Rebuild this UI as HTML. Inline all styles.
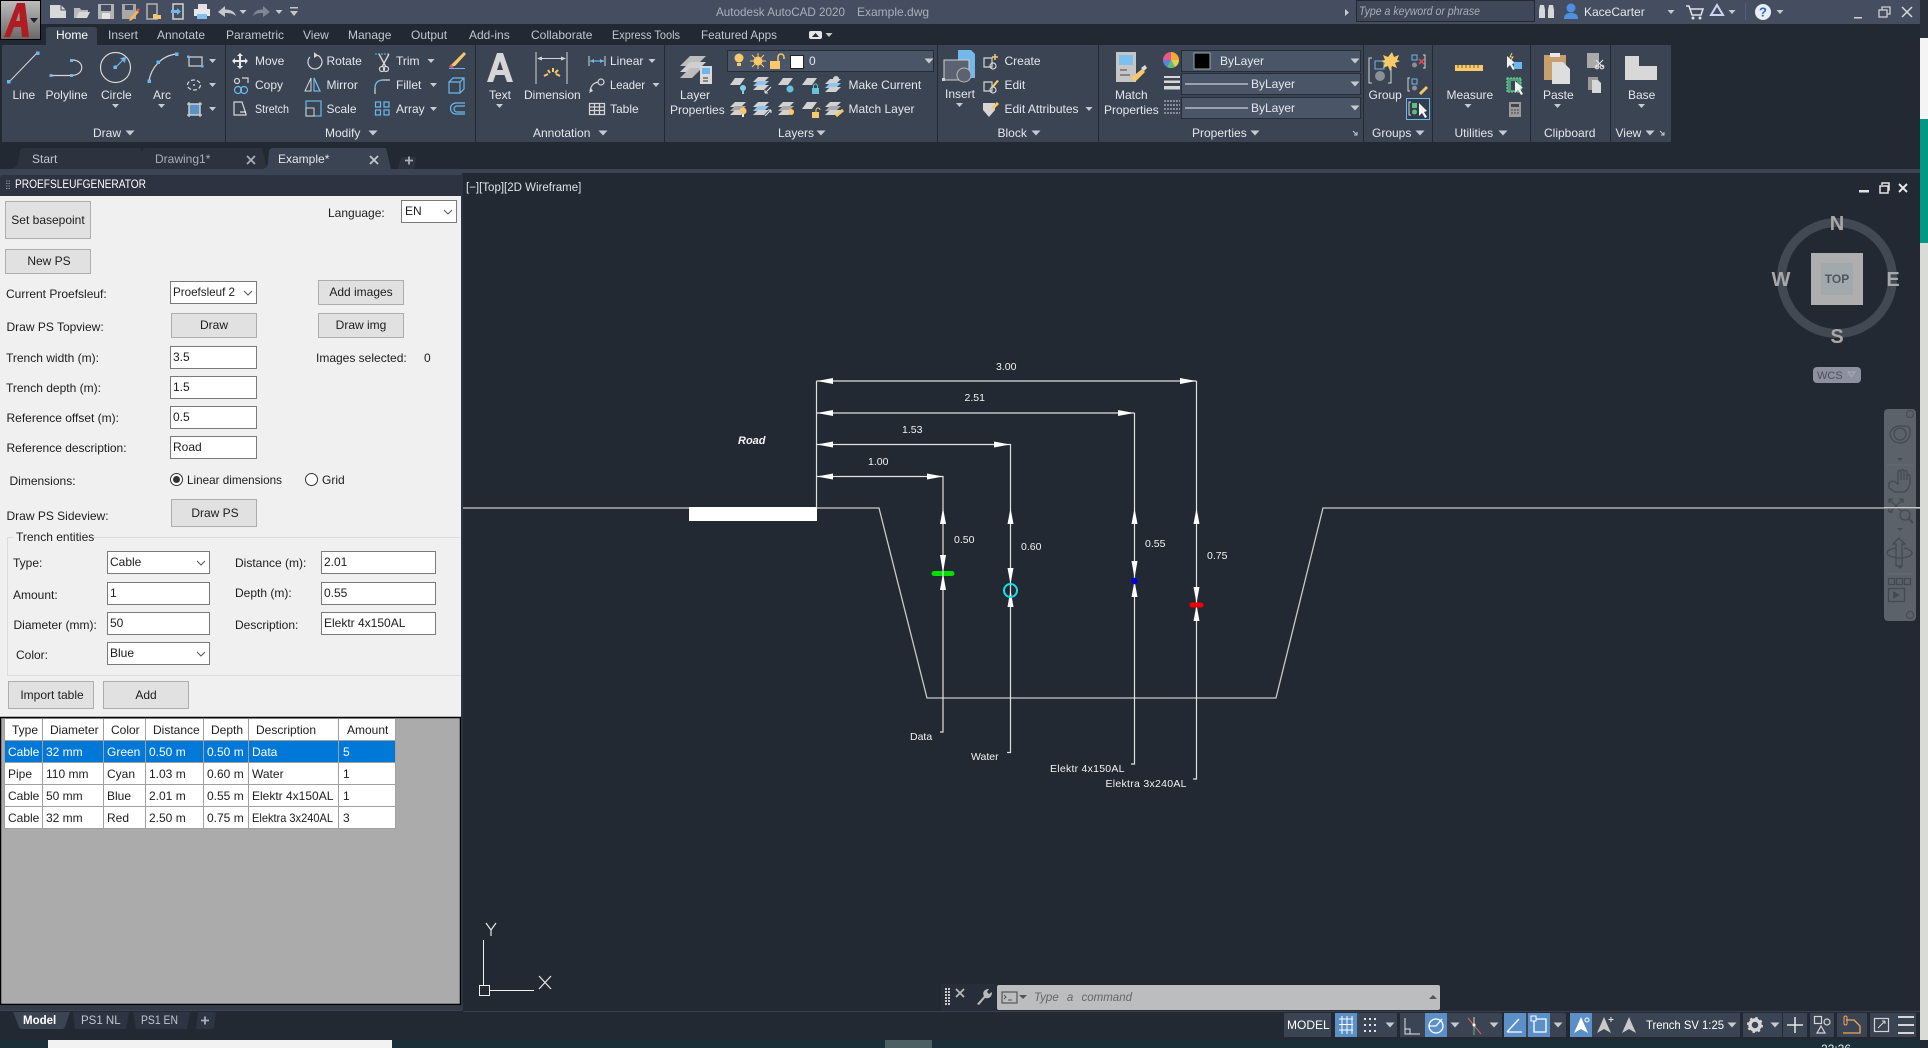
<!DOCTYPE html>
<html><head><meta charset="utf-8"><title>Autodesk AutoCAD 2020 Example.dwg</title>
<style>
html,body{margin:0;padding:0;background:#222932;width:1928px;height:1048px;overflow:hidden}
svg{display:block;position:absolute;left:0;top:0}
text{font-family:"Liberation Sans",sans-serif;font-size:12px;fill:#e4e7ec}
.g{fill:#a9afba}
.f{fill:#1c1c1c}
.d{fill:#f2f2f2;font-size:10.5px}
.w{fill:#fff}
.ic{fill:none;stroke:#d6d6d6;stroke-width:1.2}
.bl{fill:none;stroke:#6cb8ee;stroke-width:1.2}
.btn{fill:#e1e1e1;stroke:#adadad;stroke-width:1}
.inp{fill:#fff;stroke:#7a7a7a;stroke-width:1}
.chev{fill:none;stroke:#555;stroke-width:1}
.dl{stroke:#e0e0e0;stroke-width:1.2;fill:none}
.ar{fill:#fff}
.nav{fill:none;stroke:#444a52;stroke-width:1.3}
</style></head><body>
<svg width="1928" height="1048" viewBox="0 0 1928 1048" xmlns="http://www.w3.org/2000/svg">
<defs>
<polygon id="t" points="-3.5,-2 3.5,-2 0,2" fill="#c6cbd3"/>
<polygon id="t2" points="-4.5,-2.5 4.5,-2.5 0,2.5" fill="#c6cbd3"/>
<g id="ch"><polyline class="chev" points="-4,-2 0,2 4,-2"/></g>
<g id="lay"><polygon points="-9,2 -4,-5 6,-5 1,2" fill="#d2d2d2"/></g>
<g id="stk"><polygon points="-9,-1 -4,-6 7,-6 2,-1" fill="#d2d2d2"/><polygon points="-9,3 -4,-2 7,-2 2,3" fill="#8fc6ee"/><polygon points="-9,7 -4,2 7,2 2,7" fill="#d2d2d2"/></g>
<g id="gs"><polygon points="-9,-1 -4,-6 7,-6 2,-1" fill="#d2d2d2"/><polygon points="-9,3 -4,-2 7,-2 2,3" fill="#a9a9a9"/><polygon points="-9,7 -4,2 7,2 2,7" fill="#d2d2d2"/></g>
<linearGradient id="logo" x1="0" y1="0" x2="0" y2="1"><stop offset="0" stop-color="#bdbdbd"/><stop offset="1" stop-color="#686868"/></linearGradient>
</defs>

<!-- base -->
<rect width="1928" height="1048" fill="#222932"/>
<rect width="1920" height="24" fill="#454e60"/>
<rect x="0" y="24" width="1920" height="21" fill="#222932"/>
<path d="M46 45V30q0-3 3-3h45q3 0 3 3v15z" fill="#3b4453"/>

<!-- right strip -->
<rect x="1920" y="0" width="8" height="38" fill="#2a303b"/>
<rect x="1920" y="38" width="8" height="81" fill="#f4f4f4"/>
<rect x="1920" y="119" width="8" height="124" fill="#009a84"/>
<rect x="1920" y="243" width="8" height="797" fill="#d9dcd6"/>

<!-- logo -->
<rect x="0.5" y="0.5" width="40" height="39" fill="url(#logo)" stroke="#000"/>
<path d="M4 37L17 3h8l4 34h-7l-1-10h-7l-4 10zM16 21h4l-.8-9z" fill="#b01c22" fill-rule="evenodd"/>
<polygon points="30,18 38,18 34,23" fill="#222"/>

<!-- QAT -->
<path d="M50 5h11l5 5v8H50z" fill="#d8d8d8"/><path d="M61 5v5h5" fill="none" stroke="#454e60"/>
<path d="M74 8h6l1 2h7v3h-9l-2 5h-3z" fill="#b9b9b9"/><path d="M76 18l3-6h11l-3 6z" fill="#d8d8d8"/>
<path d="M98 4h16v15H98z" fill="#b4b4b4"/><rect x="101" y="5" width="10" height="6" fill="#454e60"/><rect x="102" y="13" width="8" height="6" fill="#e4e4e4"/>
<path d="M122 4h14v15h-14z" fill="#a8a8a8"/><rect x="125" y="5" width="8" height="5" fill="#454e60"/><path d="M130 18l7-8 2 2-7 8-3 1z" fill="#f2b55b"/><circle cx="138" cy="10" r="1.500" fill="#e45a5a"/>
<rect x="147" y="4" width="10" height="15" fill="none" stroke="#b4b4b4" stroke-width="1.500"/><path d="M153 14h3l1 1h4v4h-8z" fill="#f5c76a"/>
<rect x="173" y="4" width="10" height="15" fill="none" stroke="#d2d2d2" stroke-width="1.500"/><path d="M171 10h6v-2l4 3.500-4 3.500v-2h-6z" fill="#6cb8ee"/>
<rect x="198" y="4" width="9" height="5" fill="#e2e2e2"/><rect x="194" y="9" width="16" height="7" fill="#e8e8e8"/><rect x="197" y="14" width="10" height="5" fill="#7fc0ee"/>
<path d="M218 12l7-6v3.500c6 0 10 2 11 7-2-3-6-3.500-11-3.500V17z" fill="#c6c6c6"/><use href="#t" x="243" y="12"/>
<path d="M270 12l-7-6v3.500c-6 0-9 2-10 7 2-3 5-3.500 10-3.500V17z" fill="#7f8796"/><use href="#t" x="279" y="12"/>
<rect x="290" y="7" width="8" height="1.500" fill="#c6c6c6"/><polygon points="290,11 298,11 294,16" fill="#c6c6c6"/>

<text class="g" x="716" y="16" textLength="129" lengthAdjust="spacingAndGlyphs">Autodesk AutoCAD 2020</text><text class="g" x="857" y="16">Example.dwg</text>

<!-- search + infocenter -->
<polygon points="1345,9 1345,16 1349,12.500" fill="#c6cbd3"/>
<rect x="1356.500" y="0.500" width="178" height="21" fill="#3f4858" stroke="#23292f"/>
<text x="1359" y="15" style="font-style:italic;font-size:11.500px" class="g" textLength="121" lengthAdjust="spacingAndGlyphs">Type a keyword or phrase</text>
<path d="M1540 5h4l1 5v8h-6v-8zM1549 5h4l1 5v8h-6v-8z" fill="#d8d8d8"/>
<circle cx="1571" cy="8" r="4.500" fill="#4f8fe0"/><path d="M1564 19c0-5 3-6 7-6s7 1 7 6z" fill="#4f8fe0"/>
<text x="1584" y="16">KaceCarter</text><use href="#t" x="1671" y="12"/>
<path d="M1686 6h3l3 9h9l2-6h-13" fill="none" stroke="#dfe3ea" stroke-width="1.500"/><circle cx="1693" cy="18" r="1.500" fill="#dfe3ea"/><circle cx="1700" cy="18" r="1.500" fill="#dfe3ea"/>
<path d="M1717 5l6 10h-12z" fill="none" stroke="#c9d6ee" stroke-width="2"/><use href="#t" x="1732" y="12"/>
<rect x="1745" y="3" width="1" height="17" fill="#566072"/>
<circle cx="1763" cy="12" r="8" fill="#e9edf5"/><text x="1763" y="16.500" text-anchor="middle" style="font-weight:bold;font-size:13px;fill:#2b66c4">?</text><use href="#t" x="1780" y="12"/>
<rect x="1854" y="17" width="8" height="1.500" fill="#d0d0d0"/>
<rect x="1879" y="10" width="8" height="7" fill="none" stroke="#d0d0d0" stroke-width="1.300"/><path d="M1882 10V7h8v7h-3" fill="none" stroke="#d0d0d0" stroke-width="1.300"/>
<path d="M1902 7l10 10M1912 7l-10 10" stroke="#d8d8d8" stroke-width="1.500"/>

<!-- ribbon tabs -->
<text class="w" x="56" y="39">Home</text>
<g class="tb"><text x="108" y="39" style="fill:#c2c7d0">Insert</text><text x="157" y="39" style="fill:#c2c7d0">Annotate</text><text x="226" y="39" style="fill:#c2c7d0">Parametric</text><text x="303" y="39" style="fill:#c2c7d0">View</text><text x="348" y="39" style="fill:#c2c7d0">Manage</text><text x="411" y="39" style="fill:#c2c7d0">Output</text><text x="469" y="39" style="fill:#c2c7d0">Add-ins</text><text x="531" y="39" style="fill:#c2c7d0">Collaborate</text><text x="612" y="39" style="fill:#c2c7d0" textLength="68" lengthAdjust="spacingAndGlyphs">Express Tools</text><text x="701" y="39" style="fill:#c2c7d0" textLength="76" lengthAdjust="spacingAndGlyphs">Featured Apps</text></g>
<rect x="809" y="31" width="13" height="8" rx="2" fill="#e4e4e4"/><polygon points="812,37 819,37 815.500,33" fill="#222932"/><use href="#t" x="829" y="35"/>

<!-- ribbon panels -->
<rect x="2" y="45" width="223" height="97" fill="#3b4453"/>
<rect x="226" y="45" width="249" height="97" fill="#3b4453"/>
<rect x="476" y="45" width="188" height="97" fill="#3b4453"/>
<rect x="665" y="45" width="272" height="97" fill="#3b4453"/>
<rect x="938" y="45" width="160" height="97" fill="#3b4453"/>
<rect x="1099" y="45" width="264" height="97" fill="#3b4453"/>
<rect x="1364" y="45" width="68" height="97" fill="#3b4453"/>
<rect x="1433" y="45" width="97" height="97" fill="#3b4453"/>
<rect x="1531" y="45" width="79" height="97" fill="#3b4453"/>
<rect x="1611" y="45" width="60" height="97" fill="#3b4453"/>

<!-- Draw panel -->
<path d="M9 82L37 53" stroke="#d6d6d6" stroke-width="1"/><rect x="7" y="80" width="3.500" height="3.500" fill="#6cb8ee"/><rect x="36" y="51.500" width="3.500" height="3.500" fill="#6cb8ee"/>
<text x="12.500" y="99">Line</text>
<path d="M51 75.500H71M72 60c13 0 13 15 0 15.500" fill="none" stroke="#d6d6d6" stroke-width="1.200"/><rect x="49.500" y="74" width="3" height="3" fill="#6cb8ee"/><rect x="70" y="74" width="3" height="3" fill="#6cb8ee"/><rect x="70" y="59" width="3" height="3" fill="#6cb8ee"/>
<text x="45.500" y="99">Polyline</text>
<circle cx="115.500" cy="67.500" r="15" class="ic"/><path d="M115.500 67.500L124 59" class="bl"/><polygon points="126,57 120,58 125,63" fill="#6cb8ee"/><rect x="113.500" y="65.500" width="3.500" height="3.500" fill="#6cb8ee"/>
<text x="101" y="99">Circle</text><use href="#t" x="115.500" y="106"/>
<path d="M149 81c2-13 12-25 27-27" class="ic"/><rect x="147.500" y="79.500" width="3.500" height="3.500" fill="#6cb8ee"/><rect x="156.500" y="60.500" width="3.500" height="3.500" fill="#6cb8ee"/><rect x="175" y="52.500" width="3.500" height="3.500" fill="#6cb8ee"/>
<text x="153" y="99">Arc</text><use href="#t" x="161.500" y="106"/>
<rect x="189" y="57" width="13" height="9" class="ic"/><rect x="187" y="55.500" width="2.500" height="2.500" fill="#6cb8ee"/><rect x="201" y="65" width="2.500" height="2.500" fill="#6cb8ee"/><use href="#t" x="212.500" y="61"/>
<ellipse cx="194" cy="85" rx="6.500" ry="5" class="ic" stroke-dasharray="4 2"/><rect x="193" y="84" width="2" height="2" fill="#6cb8ee"/><use href="#t" x="212.500" y="85"/>
<rect x="189" y="104" width="11" height="11" fill="#5a93c4"/><rect x="189" y="104" width="11" height="11" class="ic"/><path d="M187 104h15M187 115h15M189 102v15M200 102v15" class="ic"/><use href="#t" x="212.500" y="109"/>
<text x="93" y="137">Draw</text><use href="#t2" x="130" y="133"/>

<!-- Modify panel -->
<path d="M240 53l3 3h-2v4h4v-2l3 3-3 3v-2h-4v4h2l-3 3-3-3h2v-4h-4v2l-3-3 3-3v2h4v-4h-2z" fill="#e8e8e8"/>
<text x="255" y="65">Move</text>
<path d="M316 55a7 7 0 1 1-6 2" class="ic" stroke-width="1.400"/><polygon points="314,52 318,55.500 314,58" fill="#d6d6d6"/>
<text x="326.500" y="65">Rotate</text>
<path d="M375 54h15" stroke="#6cb8ee" stroke-dasharray="2 1"/><path d="M379 54l7 13M389 54l-7 13" stroke="#d6d6d6" stroke-width="1.400"/><circle cx="382" cy="69" r="2.500" class="ic"/><circle cx="386" cy="69" r="2.500" class="ic"/>
<text x="396" y="65">Trim</text><use href="#t" x="431" y="61"/>
<path d="M452 64l12-12 2 2-11 12-4 0z" fill="#f7c96b"/><path d="M451 64l3 3-2 1-3-1z" fill="#e06060"/><rect x="449" y="68" width="16" height="1" fill="#6cb8ee"/>
<circle cx="237" cy="81" r="2.500" class="ic"/><path d="M242 78h6v5" class="ic"/><circle cx="238" cy="90" r="3.500" class="bl"/><circle cx="244" cy="90" r="3.500" class="bl"/>
<text x="255" y="89">Copy</text>
<path d="M305 91l6-13v13zM314 78l6 13h-6z" fill="none" stroke="#d6d6d6"/><path d="M314 78l6 13h-6z" class="bl"/>
<text x="326.500" y="89">Mirror</text>
<path d="M375 94v-6c0-5 3-8 8-8h7" class="ic"/><path d="M375 88c0-5 3-8 8-8" class="bl"/>
<text x="396" y="89">Fillet</text><use href="#t" x="433.500" y="85"/>
<path d="M449 82h11v11h-11zM449 82l4-4h11v11l-4 4M460 82l4-4" class="bl"/>
<path d="M234 102h8l4 12v1h-12z" class="ic"/><path d="M240 112h6" stroke="#fff"/>
<text x="255" y="113" textLength="34" lengthAdjust="spacingAndGlyphs">Stretch</text>
<rect x="306" y="101" width="15" height="15" class="bl"/><rect x="306" y="108" width="8" height="8" fill="#3b4453" stroke="#d6d6d6"/>
<text x="326.500" y="113">Scale</text>
<g class="bl"><rect x="375.500" y="102" width="5" height="5"/><rect x="384" y="102" width="5" height="5"/><rect x="375.500" y="110" width="5" height="5"/><rect x="384" y="110" width="5" height="5"/></g>
<text x="396" y="113">Array</text><use href="#t" x="433.500" y="109"/>
<path d="M465 103h-9a5.500 5.500 0 0 0 0 11h9M465 106h-8a3 3 0 0 0 0 6h8" class="bl"/>
<text x="325" y="137">Modify</text><use href="#t2" x="373" y="133"/>

<!-- Annotation -->
<path d="M487 82L497 53h6L513 82h-6l-2.500-7h-9L493 82zM497 70h6l-3-9z" fill="#d6d6d6" fill-rule="evenodd"/>
<text x="489" y="99">Text</text><use href="#t" x="499.500" y="106"/>
<path d="M536 52v32M567 52v32" stroke="#d6d6d6"/><path d="M540 58.500h23" stroke="#d6d6d6"/><polygon points="537,58.500 542,56.500 542,60.500" fill="#d6d6d6"/><polygon points="566,58.500 561,56.500 561,60.500" fill="#d6d6d6"/>
<path d="M544 76l4-2M548 70l2 3M553 68v4M558 70l-3 3M560 76l-4-2" stroke="#f7c96b" stroke-width="2"/>
<text x="524" y="99">Dimension</text>
<path d="M589 56v10M605 56v10" stroke="#d6d6d6"/><path d="M590 61h14" class="bl"/><polygon points="590,61 594,59 594,63" fill="#6cb8ee"/><polygon points="604,61 600,59 600,63" fill="#6cb8ee"/>
<text x="610" y="65">Linear</text><use href="#t" x="652" y="61"/>
<circle cx="601" cy="82" r="3" class="ic"/><path d="M598 82c-4 1-7 3-8 9" class="ic"/><polygon points="589,93 591,88 593,91" fill="#d6d6d6"/>
<text x="610" y="89" textLength="35" lengthAdjust="spacingAndGlyphs">Leader</text><use href="#t" x="656" y="85"/>
<path d="M589.500 103.500h15v11h-15zM589.500 107h15M589.500 110.500h15M594.500 103.500v11M599.500 103.500v11" class="ic" stroke-width="1"/>
<text x="610" y="113">Table</text>
<text x="533" y="137">Annotation</text><use href="#t2" x="603" y="133"/>

<!-- Layers -->
<polygon points="680,66 690,56 706,56 696,66" fill="#bdbdbd"/><polygon points="680,72 690,62 706,62 696,72" fill="#cfcfcf"/><polygon points="680,78 690,68 702,68 692,78" fill="#bdbdbd"/>
<rect x="700" y="66" width="12" height="18" fill="#d8d8d8"/><rect x="702" y="68" width="8" height="6" fill="#6cb8ee"/><path d="M703 78h5M703 81h5" stroke="#333"/>
<text x="680" y="99">Layer</text><text x="670" y="114">Properties</text>
<rect x="727.500" y="50.500" width="206" height="21" fill="#4a5568" stroke="#262c36"/>
<circle cx="739" cy="58" r="4.500" fill="#f7c96b"/><rect x="737" y="63" width="4" height="3" fill="#f7c96b"/>
<circle cx="758" cy="61" r="4.500" fill="#f7c96b"/><path d="M758 53v16M750 61h16M752 55l12 12M764 55l-12 12" stroke="#f7c96b"/>
<rect x="770" y="61" width="10" height="8" fill="#f7c96b"/><path d="M778 61v-4a3 3 0 0 1 6 0v2" fill="none" stroke="#f7c96b" stroke-width="1.500"/>
<rect x="790.500" y="55.500" width="13" height="13" fill="#fff" stroke="#222"/>
<text x="809" y="65">0</text><use href="#t2" x="929" y="61"/>

<use href="#lay" x="739" y="83"/><circle cx="743" cy="88" r="3" fill="#7fd3e8"/><rect x="742" y="91" width="2" height="3" fill="#7fd3e8"/>
<use href="#stk" x="762" y="83"/><path d="M765 93l6-6M765 93h3M765 93v-3" stroke="#e8e8e8" fill="none"/>
<use href="#lay" x="787" y="83"/><circle cx="790" cy="89" r="3.500" fill="#62c6d8"/>
<use href="#lay" x="811" y="83"/><rect x="812" y="88" width="7" height="6" fill="#62c6d8"/><path d="M813.500 88v-2a2 2 0 0 1 4 0v2" fill="none" stroke="#62c6d8"/>
<use href="#stk" x="834" y="85"/><circle cx="836" cy="79" r="3" fill="#d2d2d2"/>
<text x="848.500" y="89">Make Current</text>
<use href="#gs" x="739" y="108"/><circle cx="743" cy="111" r="3.500" fill="#f7c96b"/><rect x="742" y="114" width="2" height="3" fill="#e8e8e8"/>
<use href="#stk" x="762" y="108"/><path d="M765 116l6-6M771 110h-3M771 110v3" stroke="#e8e8e8" fill="none"/>
<use href="#gs" x="787" y="108"/><circle cx="791" cy="112" r="3" fill="#f7c96b"/>
<use href="#lay" x="811" y="107"/><rect x="812" y="112" width="7" height="6" fill="#f7c96b"/><path d="M816 112v-2a2 2 0 0 1 4 0" fill="none" stroke="#f7c96b"/>
<use href="#gs" x="834" y="108"/><path d="M836 116l7-6" stroke="#f7c96b" stroke-width="3"/>
<text x="848.500" y="113">Match Layer</text>
<text x="778" y="137">Layers</text><use href="#t2" x="821" y="133"/>

<!-- Block -->
<path d="M958 50h13l4 4v24h-17z" fill="#74b8ea"/>
<rect x="944" y="60" width="25" height="20" fill="#5b6270" stroke="#cfcfcf"/><circle cx="964" cy="75" r="7" fill="#5b6270" stroke="#b9b9b9"/><rect x="942" y="78" width="3" height="3" fill="#cfcfcf"/>
<text x="945" y="98">Insert</text><use href="#t" x="959.500" y="105"/>
<path d="M984 58h8v9h-8z" class="ic"/><circle cx="993" cy="66" r="3" class="ic"/><path d="M995 54v6M992 57h6" stroke="#f7c96b" stroke-width="1.500"/>
<text x="1004.500" y="65">Create</text>
<path d="M984 82h8v9h-8z" class="ic"/><circle cx="993" cy="90" r="3" class="ic"/><path d="M992 86l5-6 2 1-5 6z" fill="#f7c96b"/>
<text x="1004.500" y="89">Edit</text>
<path d="M983 103h12v7l-6 7-6-7z" fill="#d6d6d6"/><path d="M991 108l6-6 2 2-6 6z" fill="#f7c96b"/>
<text x="1004.500" y="113">Edit Attributes</text><use href="#t" x="1089" y="109"/>
<text x="997.500" y="137">Block</text><use href="#t2" x="1036" y="133"/>

<!-- Properties -->
<rect x="1116" y="52" width="20" height="30" fill="#c6c6c6"/><rect x="1119" y="55" width="14" height="10" fill="#7cc0ee"/>
<path d="M1120 70h7M1120 75h10" stroke="#444"/><path d="M1131 78l11-9 3 3-10 10z" fill="#f7c96b"/><path d="M1141 68l4-3 2 3-3 3z" fill="#dcdcdc"/>
<text x="1115" y="99">Match</text><text x="1104" y="114">Properties</text>
<circle cx="1171" cy="60" r="8" fill="#e05a8a"/><path d="M1171 60v-8a8 8 0 0 1 8 8z" fill="#f7a83b"/><path d="M1171 60h8a8 8 0 0 1-4 7z" fill="#dcd34e"/><path d="M1171 60l4 7a8 8 0 0 1-8 0z" fill="#5fbf73"/><path d="M1171 60l-4 7a8 8 0 0 1-4-7z" fill="#5f7fe0"/>
<path d="M1164 76h16v2h-16zM1164 80.500h16v2.500h-16zM1164 86h16v3.500h-16z" fill="#d6d6d6"/>
<path d="M1164 101h16M1164 105h16M1164 109h16M1164 113h16" stroke="#d6d6d6" stroke-dasharray="2 1"/>
<rect x="1181.500" y="50.500" width="179" height="21" fill="#4a5568" stroke="#262c36"/>
<rect x="1181.500" y="73.500" width="179" height="21" fill="#4a5568" stroke="#262c36"/>
<rect x="1181.500" y="97.500" width="179" height="21" fill="#4a5568" stroke="#262c36"/>
<rect x="1194" y="53" width="16" height="16" fill="#000" stroke="#9aa" stroke-width="1"/>
<text x="1220" y="65">ByLayer</text>
<path d="M1185 84h63M1185 108h63" stroke="#eee"/>
<text x="1251" y="88">ByLayer</text><text x="1251" y="112">ByLayer</text>
<use href="#t2" x="1355" y="61"/><use href="#t2" x="1355" y="84"/><use href="#t2" x="1355" y="108"/>
<text x="1192" y="137">Properties</text><use href="#t2" x="1255" y="133"/>
<path d="M1353 131l4 4m0-3v3h-3" fill="none" stroke="#c6cbd3"/>

<!-- Groups -->
<path d="M1372 58h-3v25h3M1391 62v21h-3" fill="none" stroke="#d6d6d6"/><rect x="1375" y="61" width="9" height="8" fill="none" stroke="#6cb8ee"/><circle cx="1380" cy="76" r="5" fill="#8a8f98"/>
<path d="M1392 52l2 5 5-2-2 5 3 1-5 2 2 5-5-2-2 5-2-5-5 2 2-5-4-2 4-1-2-5 5 2z" fill="#f7c96b"/>
<rect x="1412" y="55" width="5" height="5" fill="none" stroke="#6cb8ee"/><circle cx="1414.500" cy="65" r="2.500" fill="#8a8f98"/><path d="M1423 55h2v13h-2" fill="none" stroke="#d6d6d6"/><path d="M1419 59l5 5m0-5l-5 5" stroke="#e05050" stroke-width="1.500"/>
<rect x="1412" y="79" width="5" height="5" fill="none" stroke="#6cb8ee"/><circle cx="1414.500" cy="88" r="2.500" fill="#8a8f98"/><path d="M1410 78h-2v13h2" fill="none" stroke="#d6d6d6"/><path d="M1419 93l7-7 2 2-7 7z" fill="#f7c96b"/>
<rect x="1406.500" y="98.500" width="23" height="21" fill="#333c4a" stroke="#6cb8ee"/>
<rect x="1412" y="103" width="5" height="5" fill="#5dc083"/><circle cx="1414.500" cy="112" r="2.500" fill="#5dc083"/><path d="M1411 102h-2v13h2" fill="none" stroke="#d6d6d6"/><polygon points="1419,103 1419,116 1422,113 1425,118 1427,117 1424,112 1427,111" fill="#f2f2f2"/>
<text x="1368.500" y="99">Group</text>
<text x="1372" y="137">Groups</text><use href="#t2" x="1420" y="133"/>

<!-- Utilities -->
<rect x="1455" y="65" width="28" height="6" fill="#f7c96b"/><path d="M1458 65v3M1462 65v3M1466 65v3M1470 65v3M1474 65v3M1478 65v3" stroke="#7a6130"/>
<text x="1446.500" y="99">Measure</text><use href="#t" x="1468" y="106"/>
<polygon points="1507,56 1507,68 1510,65 1513,70 1515,69 1512,64 1515,63" fill="#f2f2f2"/><path d="M1512 53l-2 4h3l-2 3" stroke="#f7c96b" fill="none"/><rect x="1514" y="62" width="8" height="7" fill="#6cb8ee"/>
<rect x="1507" y="78" width="14" height="14" fill="#4e9d78" stroke="#6de29e" stroke-dasharray="2 1"/><rect x="1511" y="81" width="6" height="9" fill="#3b4453"/><polygon points="1515,81 1515,93 1518,90 1521,95 1523,94 1520,89 1523,88" fill="#f2f2f2"/>
<rect x="1509" y="102" width="12" height="15" fill="#9a9a9a"/><rect x="1511" y="104" width="8" height="3" fill="#444"/><path d="M1511 110h8M1511 113h8" stroke="#444" stroke-dasharray="2 1"/>
<text x="1454.500" y="137">Utilities</text><use href="#t2" x="1503" y="133"/>

<!-- Clipboard -->
<rect x="1544" y="55" width="22" height="25" fill="#c7a06e"/><rect x="1550" y="53" width="10" height="4" fill="#e8e8e8"/>
<path d="M1552 62h11l7 7v15h-18z" fill="#dedede"/>
<text x="1543" y="99">Paste</text><use href="#t" x="1557.500" y="106"/>
<rect x="1587" y="53" width="12" height="15" fill="#aaa"/><path d="M1596 60l7 7m0-7l-7 7" stroke="#e8e8e8"/><circle cx="1597" cy="67" r="1.800" class="ic"/><circle cx="1602" cy="67" r="1.800" class="ic"/>
<rect x="1588" y="77" width="10" height="13" fill="#9a9a9a"/><path d="M1592 80h6l3 3v10h-9z" fill="#d8d8d8"/>
<text x="1544" y="137">Clipboard</text>

<!-- View -->
<path d="M1625 56h14v10h18v14h-32z" fill="#d8d8d8"/>
<text x="1628" y="99">Base</text><use href="#t" x="1641.500" y="106"/>
<text x="1615.500" y="137">View</text><use href="#t2" x="1650" y="133"/>
<path d="M1660 131l4 4m0-3v3h-3" fill="none" stroke="#c6cbd3"/>

<!-- doc tabs -->
<path d="M8 169c5 0 9-2 10-6l2-12q1-3 4-3h117l4 21z" fill="#2c333f"/>
<path d="M136 169l6-18q1-3 4-3h116l5 21z" fill="#2c333f"/>
<path d="M262 169c3 0 5-2 6-6l1-12q1-3 4-3h113l5 21z" fill="#3b4453"/>
<text x="32" y="163" style="fill:#c2c7d0">Start</text>
<text x="155" y="163" style="fill:#a9afba">Drawing1*</text>
<path d="M247 156l8 8m0-8l-8 8" stroke="#a9afba" stroke-width="1.800"/>
<text x="278" y="163">Example*</text>
<path d="M370 156l8 8m0-8l-8 8" stroke="#c2c7d0" stroke-width="1.800"/>
<path d="M398 170l2-10q1-3 4-3h12l-1 10q-1 3-4 3z" fill="#2c333f"/>
<path d="M405 160.500h8M409 156.500v8" stroke="#a9afba" stroke-width="1.800"/>
<rect x="0" y="169" width="1920" height="4" fill="#3b4453"/>

<!-- palette -->
<rect x="0" y="173" width="463" height="838" fill="#3b4453"/>
<path d="M0 178q0-3 3-3h459v21H0z" fill="#2d3340"/>
<path d="M6 181h4M6 183.500h4M6 186h4M6 188.500h4" stroke="#8c93a0" stroke-dasharray="1.500 1"/>
<text class="w" x="15" y="188" style="font-size:11.500px" textLength="131" lengthAdjust="spacingAndGlyphs">PROEFSLEUFGENERATOR</text>
<rect x="0" y="196" width="461" height="521" fill="#f0f0f0"/>

<rect class="btn" x="5.500" y="201.500" width="85" height="37"/><text class="f" x="48" y="224" text-anchor="middle">Set basepoint</text>
<text class="f" x="328" y="217">Language:</text>
<rect class="inp" x="401.500" y="200.500" width="55" height="22"/><text class="f" x="405" y="215">EN</text><use href="#ch" x="448" y="212"/>
<rect class="btn" x="5.500" y="249.500" width="85" height="24"/><text class="f" x="49" y="265" text-anchor="middle">New PS</text>
<text class="f" x="6" y="298">Current Proefsleuf:</text>
<rect class="inp" x="170.500" y="281.500" width="86" height="22"/><text class="f" x="173" y="296" textLength="62" lengthAdjust="spacingAndGlyphs">Proefsleuf 2</text><use href="#ch" x="248" y="293"/>
<rect class="btn" x="318.500" y="280.500" width="85" height="24"/><text class="f" x="361" y="296" text-anchor="middle">Add images</text>
<text class="f" x="6.500" y="331">Draw PS Topview:</text>
<rect class="btn" x="171.500" y="313.500" width="85" height="24"/><text class="f" x="214" y="329" text-anchor="middle">Draw</text>
<rect class="btn" x="318.500" y="313.500" width="85" height="24"/><text class="f" x="361" y="329" text-anchor="middle">Draw img</text>
<text class="f" x="6" y="362">Trench width (m):</text><rect class="inp" x="170.500" y="346.500" width="86" height="22"/><text class="f" x="173" y="361">3.5</text>
<text class="f" x="316" y="362">Images selected:</text><text class="f" x="424" y="362">0</text>
<text class="f" x="6" y="392">Trench depth (m):</text><rect class="inp" x="170.500" y="376.500" width="86" height="22"/><text class="f" x="173" y="391">1.5</text>
<text class="f" x="6.500" y="422">Reference offset (m):</text><rect class="inp" x="170.500" y="406.500" width="86" height="22"/><text class="f" x="173" y="421">0.5</text>
<text class="f" x="6.500" y="452">Reference description:</text><rect class="inp" x="170.500" y="436.500" width="86" height="22"/><text class="f" x="173" y="451">Road</text>
<text class="f" x="9.500" y="485">Dimensions:</text>
<circle cx="176.500" cy="479.500" r="6" fill="#fff" stroke="#333"/><circle cx="176.500" cy="479.500" r="3.500" fill="#333"/>
<text class="f" x="187" y="484" textLength="95" lengthAdjust="spacingAndGlyphs">Linear dimensions</text>
<circle cx="311.500" cy="479.500" r="6" fill="#fff" stroke="#333"/><text class="f" x="322" y="484">Grid</text>
<text class="f" x="6.500" y="520">Draw PS Sideview:</text>
<rect class="btn" x="171.500" y="499.500" width="85" height="27"/><text class="f" x="215" y="517" text-anchor="middle">Draw PS</text>

<path d="M14 537.500H7.500V675.500H460.500M93 537.500H460.500" fill="none" stroke="#dcdcdc"/>
<text class="f" x="16" y="541">Trench entities</text>
<text class="f" x="13" y="567">Type:</text><rect class="inp" x="107.500" y="551.500" width="102" height="22"/><text class="f" x="110" y="566">Cable</text><use href="#ch" x="201" y="563"/>
<text class="f" x="13" y="599">Amount:</text><rect class="inp" x="107.500" y="582.500" width="102" height="22"/><text class="f" x="110" y="597">1</text>
<text class="f" x="13.500" y="629">Diameter (mm):</text><rect class="inp" x="107.500" y="612.500" width="102" height="22"/><text class="f" x="110" y="627">50</text>
<text class="f" x="16" y="659">Color:</text><rect class="inp" x="107.500" y="642.500" width="102" height="22"/><text class="f" x="110" y="657">Blue</text><use href="#ch" x="201" y="654"/>
<text class="f" x="235" y="567">Distance (m):</text><rect class="inp" x="321.500" y="551.500" width="114" height="22"/><text class="f" x="324" y="566">2.01</text>
<text class="f" x="235" y="597">Depth (m):</text><rect class="inp" x="321.500" y="582.500" width="114" height="22"/><text class="f" x="324" y="597">0.55</text>
<text class="f" x="235" y="629">Description:</text><rect class="inp" x="321.500" y="612.500" width="114" height="22"/><text class="f" x="324" y="627">Elektr 4x150AL</text>
<rect class="btn" x="8.500" y="681.500" width="85" height="27"/><text class="f" x="52" y="699" text-anchor="middle">Import table</text>
<rect class="btn" x="103.500" y="681.500" width="85" height="27"/><text class="f" x="146" y="699" text-anchor="middle">Add</text>

<!-- grid -->
<rect x="0.500" y="717.500" width="460" height="287" fill="#ababab" stroke="#000" stroke-width="1.500"/>
<rect x="4" y="719" width="392" height="110" fill="#fff"/>
<rect x="5" y="741" width="390" height="21" fill="#0078d7"/>
<path d="M4.500 719v109M42.500 719v109M103.500 719v109M145.500 719v109M203.500 719v109M248.500 719v109M338.500 719v109M395.500 719v109M4 740.500h392M4 762.500h392M4 784.500h392M4 806.500h392M4 828.500h392" stroke="#a0a0a0" fill="none"/>
<g>
<text class="f" x="12" y="734">Type</text><text class="f" x="50" y="734">Diameter</text><text class="f" x="111" y="734">Color</text><text class="f" x="153" y="734">Distance</text><text class="f" x="211" y="734">Depth</text><text class="f" x="256" y="734">Description</text><text class="f" x="347" y="734">Amount</text>
<text class="w" x="8" y="756">Cable</text><text class="w" x="46" y="756">32 mm</text><text class="w" x="107" y="756">Green</text><text class="w" x="149" y="756">0.50 m</text><text class="w" x="207" y="756">0.50 m</text><text class="w" x="252" y="756">Data</text><text class="w" x="343" y="756">5</text>
<text class="f" x="8" y="778">Pipe</text><text class="f" x="46" y="778">110 mm</text><text class="f" x="107" y="778">Cyan</text><text class="f" x="149" y="778">1.03 m</text><text class="f" x="207" y="778">0.60 m</text><text class="f" x="252" y="778">Water</text><text class="f" x="343" y="778">1</text>
<text class="f" x="8" y="800">Cable</text><text class="f" x="46" y="800">50 mm</text><text class="f" x="107" y="800">Blue</text><text class="f" x="149" y="800">2.01 m</text><text class="f" x="207" y="800">0.55 m</text><text class="f" x="252" y="800">Elektr 4x150AL</text><text class="f" x="343" y="800">1</text>
<text class="f" x="8" y="822">Cable</text><text class="f" x="46" y="822">32 mm</text><text class="f" x="107" y="822">Red</text><text class="f" x="149" y="822">2.50 m</text><text class="f" x="207" y="822">0.75 m</text><text class="f" x="252" y="822" textLength="81" lengthAdjust="spacingAndGlyphs">Elektra 3x240AL</text><text class="f" x="343" y="822">3</text>
</g>

<!-- drawing -->
<rect x="461" y="173" width="2" height="838" fill="#2d3340"/>
<text x="466" y="191" style="fill:#dfe3ea;font-size:11.500px">[−][Top][2D Wireframe]</text>
<path d="M463 508H879L927 698H1276L1323 508H1920" fill="none" stroke="#c9c9c9" stroke-width="1.300"/>
<rect x="689" y="507" width="128" height="14" fill="#fff"/>
<path d="M816.500 381V508M816.500 381H1196.500M816.500 413H1134.500M816.500 444.500H1010.500M816.500 476.500H943M943 476V732H940M1010.500 444V752.500H1007M1134.500 413V764H1131M1196.500 381V779H1193" class="dl"/>
<g class="ar">
<polygon points="817,381 833,378 833,384"/><polygon points="1196,381 1180,378 1180,384"/>
<polygon points="817,413 833,410 833,416"/><polygon points="1134,413 1118,410 1118,416"/>
<polygon points="817,444.500 833,441.500 833,447.500"/><polygon points="1010,444.500 994,441.500 994,447.500"/>
<polygon points="817,476.500 833,473.500 833,479.500"/><polygon points="943,476.500 927,473.500 927,479.500"/>
<polygon points="943,508 940,524 946,524"/><polygon points="943,573 940,555 946,555"/><polygon points="943,573 940,590 946,590"/>
<polygon points="1010.500,508 1007.500,524 1013.500,524"/><polygon points="1010.500,584 1007.500,568 1013.500,568"/><polygon points="1010.500,590 1007.500,607 1013.500,607"/>
<polygon points="1134.500,508 1131.500,524 1137.500,524"/><polygon points="1134.500,578 1131.500,561 1137.500,561"/><polygon points="1134.500,581 1131.500,597 1137.500,597"/>
<polygon points="1196.500,508 1193.500,524 1199.500,524"/><polygon points="1196.500,603 1193.500,587 1199.500,587"/><polygon points="1196.500,605 1193.500,621 1199.500,621"/>
</g>
<path d="M934 573.500H952" stroke="#00e000" stroke-width="5" stroke-linecap="round"/><path d="M943 571V590" stroke="#fff"/>
<circle cx="1010.500" cy="590.500" r="6.500" fill="none" stroke="#16e0ea" stroke-width="2"/>
<circle cx="1134.500" cy="581" r="3.200" fill="#0000e6"/>
<path d="M1192 605H1201" stroke="#f00000" stroke-width="5" stroke-linecap="round"/>
<text class="d" x="996" y="370">3.00</text><text class="d" x="964.500" y="401">2.51</text><text class="d" x="902" y="433">1.53</text><text class="d" x="868" y="465">1.00</text>
<text class="d" x="954" y="543">0.50</text><text class="d" x="1021" y="550">0.60</text><text class="d" x="1145" y="547">0.55</text><text class="d" x="1207" y="559">0.75</text>
<text class="d" x="738" y="444" style="font-style:italic;font-size:11px;font-weight:bold">Road</text>
<text class="d" x="910" y="740">Data</text><text class="d" x="971" y="760">Water</text><text class="d" x="1050" y="772" textLength="74.500" lengthAdjust="spacing">Elektr 4x150AL</text><text class="d" x="1105.500" y="787" textLength="81" lengthAdjust="spacing">Elektra 3x240AL</text>

<!-- UCS -->
<path d="M483.500 940V985M489 990.500H534M479.500 985.500h10v10h-10z" fill="none" stroke="#f0f0f0"/>
<path d="M486 923l5 7 5-7M491 930v6" fill="none" stroke="#e8e8e8" stroke-width="1.200"/>
<path d="M539 976l12 13M551 976l-12 13" stroke="#e8e8e8" stroke-width="1.200"/>

<!-- viewport controls -->
<rect x="1859" y="190" width="10" height="2.500" fill="#e4e4e4"/>
<rect x="1880" y="186" width="8" height="7" fill="none" stroke="#e4e4e4" stroke-width="1.500"/><path d="M1882 185v-2h7v7h-1" fill="none" stroke="#e4e4e4" stroke-width="1.500"/>
<path d="M1899 184l8 8m0-8l-8 8" stroke="#e8e8e8" stroke-width="2"/>

<!-- viewcube -->
<circle cx="1837" cy="278" r="55.500" fill="none" stroke="#424952" stroke-width="9"/>
<rect x="1811" y="253" width="52" height="52" fill="#aeaeae"/><rect x="1821" y="263" width="32" height="32" fill="#a1a9ad"/>
<text x="1837" y="283" text-anchor="middle" style="font-size:12px;font-weight:bold;fill:#50565e">TOP</text>
<g style="font-weight:bold">
<text x="1837" y="230" text-anchor="middle" style="font-size:20px;font-weight:bold;fill:#a8a8a8">N</text>
<text x="1781" y="286" text-anchor="middle" style="font-size:20px;font-weight:bold;fill:#a8a8a8">W</text>
<text x="1893" y="286" text-anchor="middle" style="font-size:20px;font-weight:bold;fill:#a8a8a8">E</text>
<text x="1837" y="343" text-anchor="middle" style="font-size:20px;font-weight:bold;fill:#a8a8a8">S</text>
</g>
<rect x="1813" y="367" width="48" height="16" rx="4" fill="#8d919f"/>
<text x="1817" y="379" style="font-size:11px;fill:#4c5058">WCS</text>
<polygon points="1848,372 1855,372 1851.500,376.500" fill="none" stroke="#aab"/>

<!-- nav bar -->
<rect x="1884" y="409" width="32" height="212" rx="4" fill="#5c6269"/>
<circle cx="1910" cy="414" r="3.500" fill="none" stroke="#444a52"/>
<path d="M1890 433a10 10 0 1 0 20 0v-3a4 4 0 0 0-4-4h-6a10 10 0 0 0-10 7z" class="nav"/><circle cx="1900" cy="434" r="6" class="nav"/>
<polygon points="1897,458 1903,458 1900,461" fill="#444a52"/>
<path d="M1887 465h26" stroke="#666c74"/>
<path d="M1889 488l6 4h9c4-2 6-6 6-10v-6a1.500 1.500 0 0 0-3 0v4v-8a1.500 1.500 0 0 0-3 0v8v-9a1.500 1.500 0 0 0-3 0v9v-8a1.500 1.500 0 0 0-3 0v12l-3-2c-3-2-5 0-6 1z" class="nav"/>
<path d="M1889 499l12 12M1903 499l-13 13M1889 499v4M1889 499h4M1903 499v4M1903 499h-4M1889 512v-4M1889 512h4" class="nav"/><circle cx="1905" cy="515" r="5" class="nav"/><path d="M1909 519l4 4" stroke="#444a52" stroke-width="2"/>
<polygon points="1897,528 1903,528 1900,531" fill="#444a52"/>
<path d="M1896 557v-13h-3l6-6 6 6h-3v22h-6zM1896 548c-6 1-9 3-9 5s5 5 13 5 12-3 12-5-3-4-8-5" class="nav"/>
<polygon points="1897,566 1903,566 1900,569" fill="#444a52"/>
<path d="M1887 574h26" stroke="#666c74"/>
<rect x="1888.500" y="578.500" width="6" height="6" class="nav"/><rect x="1896.500" y="578.500" width="6" height="6" class="nav"/><rect x="1904.500" y="578.500" width="6" height="6" class="nav"/>
<rect x="1888.500" y="588.500" width="16" height="13" class="nav"/><polygon points="1893,591 1893,599 1900,595" fill="#444a52"/>
<circle cx="1910" cy="615" r="3.500" fill="none" stroke="#444a52"/>

<!-- re-draw ground line over nav bar -->
<path d="M1884 507.700H1920" stroke="#c9c9c9" stroke-width="1.300"/>

<!-- layout tabs & separators -->
<rect x="0" y="1005" width="463" height="5" fill="#343b48"/>
<rect x="463" y="1011" width="1457" height="1" fill="#3a404c"/>
<path d="M13 1012h57l-5 15q-1 2-3 2H23q-3 0-4-2z" fill="#3b4453"/>
<path d="M73 1012h56l-3 17H75z" fill="#2e3542"/>
<path d="M133 1012h57l-3 17h-51z" fill="#2e3542"/>
<path d="M198 1012h18l-2 15q-1 2-4 2h-14z" fill="#2e3542"/>
<text class="w" x="23" y="1024" style="font-weight:bold;font-size:11.500px">Model</text>
<text x="81" y="1024" style="fill:#c2c7d0;font-size:11.500px">PS1 NL</text>
<text x="141" y="1024" style="fill:#c2c7d0;font-size:11.500px" textLength="37" lengthAdjust="spacingAndGlyphs">PS1 EN</text>
<path d="M201 1020.500h8M205 1016.500v8" stroke="#a9afba" stroke-width="1.800"/>

<!-- command line -->
<rect x="941" y="984" width="55" height="27" fill="#272e39"/>
<path d="M946 988v17M949 988v17" stroke="#c9c9c9" stroke-width="2" stroke-dasharray="2 1"/>
<path d="M956 989l8 8m0-8l-8 8" stroke="#b9b9b9" stroke-width="1.800"/>
<path d="M977 1004l7-8c-2-3 0-7 5-7l-2 3 2 2 3-2c0 5-3 7-7 6l-6 7z" fill="#b9b9b9"/>
<rect x="997" y="985" width="443" height="25" rx="2" fill="#bcbdbf"/>
<rect x="1002" y="992" width="15" height="11" fill="none" stroke="#555" stroke-width="1.200"/><path d="M1004 995l2 2-2 2M1008 1000h4" stroke="#555" fill="none"/>
<polygon points="1019,995 1027,995 1023,999" fill="#555"/>
<text x="1034" y="1001" style="font-style:italic;fill:#666;font-size:11.500px;word-spacing:5px">Type a command</text>
<polygon points="1429,999 1437,999 1433,995" fill="#555"/>

<!-- status bar -->
<rect x="1284" y="1013" width="47" height="24" fill="#3b4453"/>
<text class="w" x="1287" y="1029">MODEL</text>
<rect x="1335" y="1013" width="62" height="24" fill="#3b4453"/>
<rect x="1335" y="1013" width="22" height="24" fill="#5a8fc8"/>
<path d="M1339 1019h14M1339 1024.500h14M1339 1030h14M1342 1016v18M1347 1016v18M1352 1016v18" stroke="#fff"/>
<path d="M1364 1019h12M1364 1025h12M1364 1031h12" stroke="#dfe3ea" stroke-width="2" stroke-dasharray="2 3"/>
<use href="#t2" x="1390" y="1025"/>
<rect x="1400" y="1013" width="102" height="24" fill="#3b4453"/>
<path d="M1405 1018v16h15M1405 1029h5v5" fill="none" stroke="#dfe3ea"/>
<rect x="1425" y="1013" width="22" height="24" fill="#5a8fc8"/>
<circle cx="1436" cy="1026" r="7" fill="none" stroke="#fff" stroke-width="1.300"/><path d="M1429 1026h7l6-7" fill="none" stroke="#fff" stroke-width="1.300"/>
<use href="#t2" x="1455" y="1025"/>
<path d="M1468 1018l13 16" stroke="#e06060"/><path d="M1474 1025v10" stroke="#5dc083"/><path d="M1474 1017v8" stroke="#d6d6d6"/><circle cx="1474" cy="1025" r="1.500" fill="#fff"/>
<use href="#t2" x="1494" y="1025"/>
<rect x="1504" y="1013" width="62" height="24" fill="#3b4453"/>
<rect x="1504" y="1013" width="22" height="24" fill="#5a8fc8"/>
<path d="M1507 1032h15M1507 1032l12-13" fill="none" stroke="#fff" stroke-width="1.300"/>
<rect x="1528" y="1013" width="22" height="24" fill="#5a8fc8"/>
<path d="M1534 1019h12v13h-12z" fill="none" stroke="#fff" stroke-width="1.300"/><rect x="1531" y="1016" width="5" height="5" fill="#5a8fc8" stroke="#fff"/>
<use href="#t2" x="1558" y="1025"/>
<rect x="1570" y="1013" width="170" height="24" fill="#3b4453"/>
<rect x="1570" y="1013" width="22" height="24" fill="#5a8fc8"/>
<path d="M1581 1017l3 7 4 9-7-4-7 4 4-9z" fill="#fff"/><circle cx="1587" cy="1020" r="2" fill="none" stroke="#fff"/>
<path d="M1604 1017l3 7 4 9-7-4-7 4 4-9z" fill="#c9c9c9"/><path d="M1611 1017v5M1608.500 1019.500h5" stroke="#e4e4e4"/>
<path d="M1629 1017l3 7 4 9-7-4-7 4 4-9z" fill="#c9c9c9"/>
<text class="w" x="1646" y="1029" textLength="78" lengthAdjust="spacingAndGlyphs">Trench SV 1:25</text><use href="#t2" x="1732" y="1025"/>
<rect x="1743" y="1013" width="39" height="24" fill="#3b4453"/>
<circle cx="1755" cy="1025" r="5" fill="none" stroke="#d6d6d6" stroke-width="3.500"/><circle cx="1755" cy="1025" r="7" fill="none" stroke="#d6d6d6" stroke-width="2" stroke-dasharray="2.500 3"/>
<use href="#t2" x="1775" y="1025"/>
<rect x="1783" y="1013" width="24" height="24" fill="#3b4453"/>
<path d="M1787 1025h16M1795 1017v16" stroke="#e8e8e8" stroke-width="1.500"/>
<rect x="1810" y="1013" width="24" height="24" fill="#3b4453"/>
<rect x="1814.500" y="1016.500" width="7" height="7" class="ic"/><circle cx="1827" cy="1022" r="3" class="ic"/><path d="M1821 1026l4 7h-8z" class="ic"/>
<rect x="1837" y="1013" width="30" height="24" fill="#3b4453"/>
<path d="M1846 1020h8l6 6v7h-17" fill="none" stroke="#f2a65a" stroke-width="1.300"/><rect x="1844" y="1016" width="3" height="9" rx="1.500" fill="none" stroke="#f2a65a"/>
<rect x="1870" y="1013" width="46" height="24" fill="#3b4453"/>
<rect x="1874.500" y="1018.500" width="14" height="13" class="ic"/><path d="M1878 1028l7-7M1885 1021h-3M1885 1021v3" stroke="#d6d6d6"/>
<path d="M1898 1017h16M1898 1025h16M1898 1033h16" stroke="#d6d6d6" stroke-width="2"/>

<!-- bottom desktop strip -->
<rect x="0" y="1040" width="1920" height="8" fill="#1b2f38"/>
<rect x="885" y="1040" width="47" height="8" fill="#4c5f63"/>
<rect x="48" y="1040" width="344" height="8" fill="#f2f2f2"/>
<text x="1821" y="1053" style="font-size:12px;fill:#e8e8e8">22:26</text>
</svg>
</body></html>
